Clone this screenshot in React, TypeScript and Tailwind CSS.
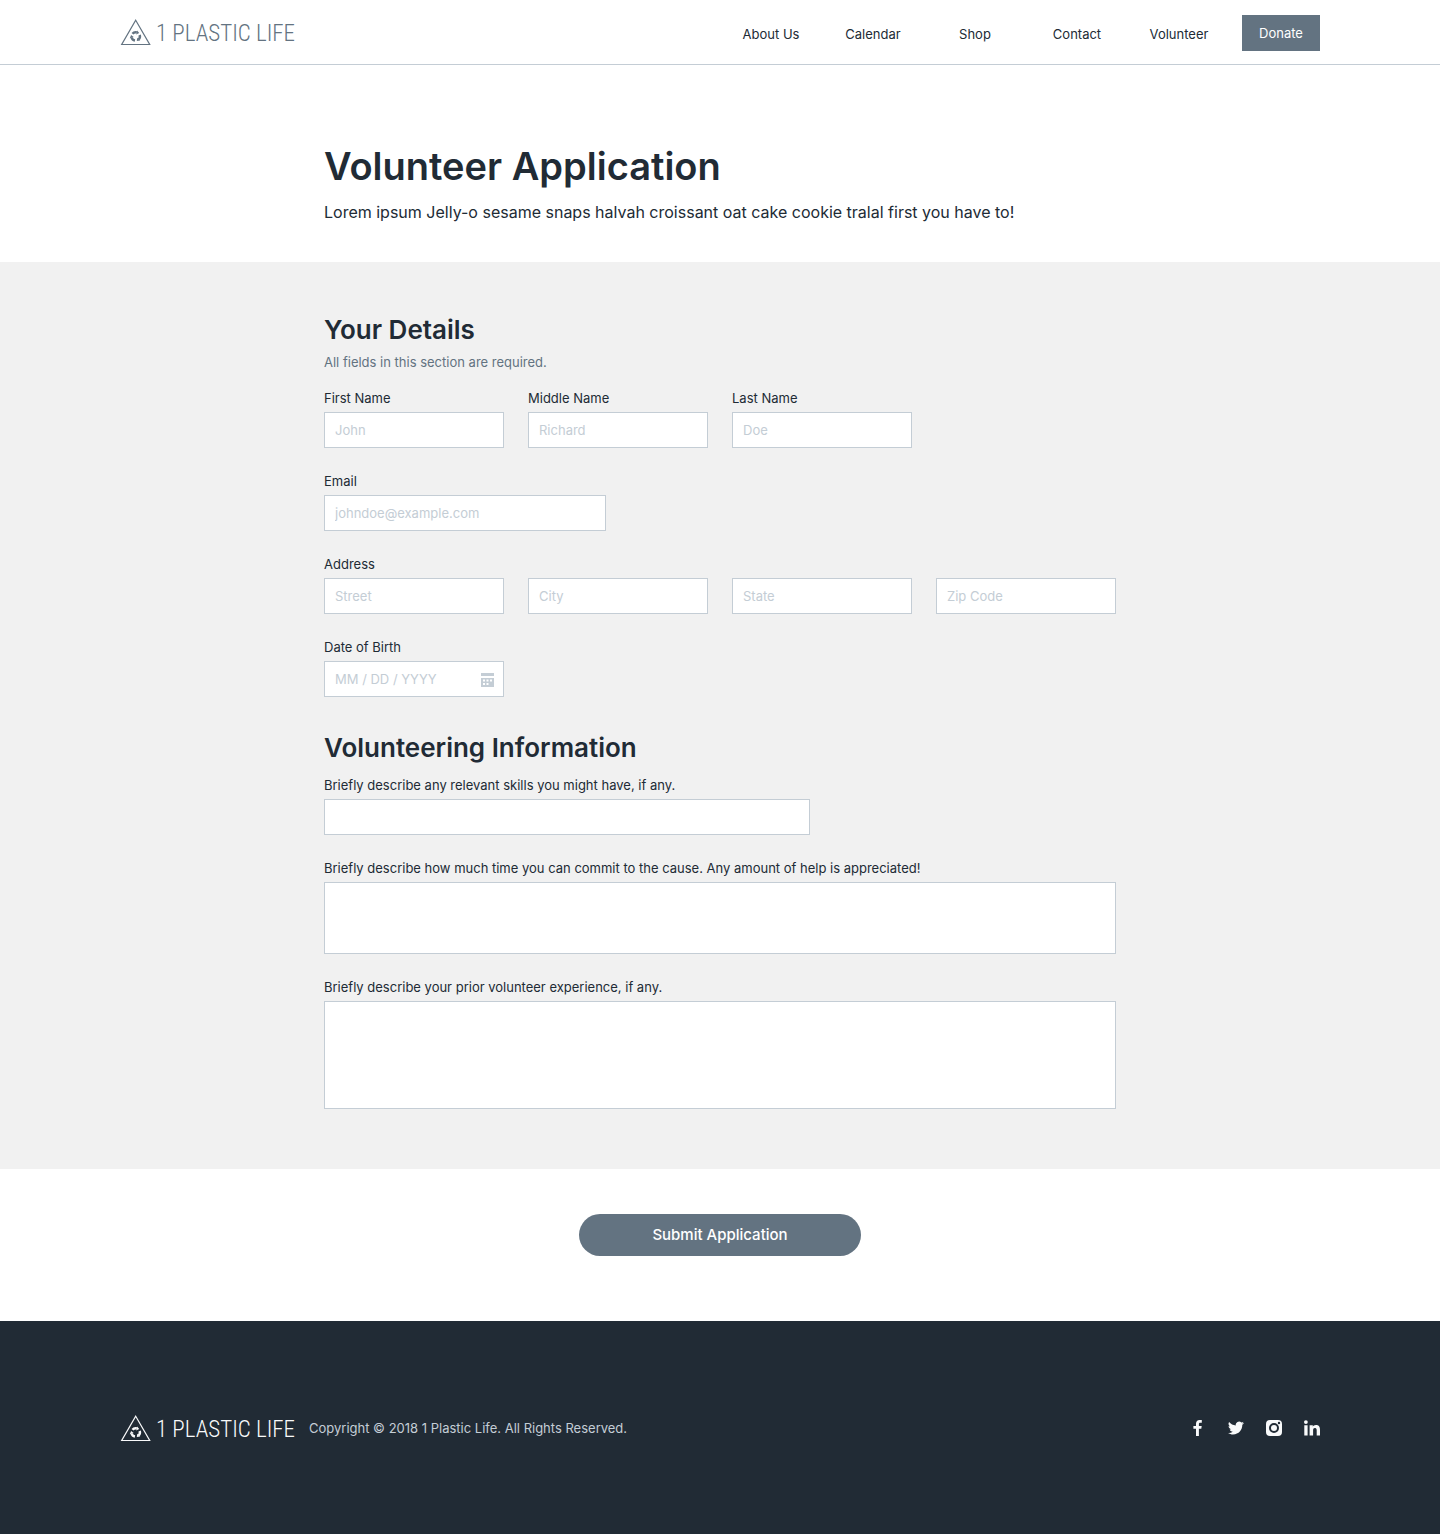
import type { ReactNode } from "react";

const navLinks = ["About Us", "Calendar", "Shop", "Contact", "Volunteer"];

const controlClass =
  "block w-full rounded-none border border-[#c4cdd5] bg-white px-2.5 text-[13px] text-[#212b35] placeholder:text-[#c4cdd5] focus:border-[#637381] focus:outline-none";

const recycleTurns = [0, 120, 240];

function Logo() {
  return (
    <a href="#home" className="flex items-center gap-1">
      <svg viewBox="0 0 32 28" className="h-7 w-8" fill="none" stroke="currentColor" aria-hidden="true">
        <path d="M15.7 2.3 29.7 26.5H1.700Z" strokeWidth="1.2" />
        {recycleTurns.map((turn) => (
          <g key={turn} transform={`translate(9.7 12.4) rotate(${turn} 6 6)`}>
            <path d="M2.780 3.300A4.200 4.200 0 0 1 7.090 1.940" strokeWidth="2.5" />
            <path d="M7.400 0 6.500 4 9.500 2.700Z" fill="currentColor" stroke="none" />
          </g>
        ))}
      </svg>
      <span className="pt-1 font-['Roboto_Condensed','Liberation_Sans_Narrow',sans-serif] text-[23px] leading-6 font-light whitespace-nowrap">
        1 PLASTIC LIFE
      </span>
    </a>
  );
}

function Field({ id, label, className, children }: { id: string; label: string; className: string; children: ReactNode }) {
  return (
    <div className={className}>
      <label htmlFor={id} className="mb-1 block text-[13px] leading-[19px] whitespace-nowrap">
        {label}
      </label>
      {children}
    </div>
  );
}

function TextInput({ id, placeholder, label }: { id: string; placeholder?: string; label?: string }) {
  return (
    <input id={id} name={id} type="text" placeholder={placeholder} aria-label={label} className={`${controlClass} h-9`} />
  );
}

function CalendarIcon() {
  return (
    <svg viewBox="0 0 13 15" className="absolute top-[11px] right-2.5 h-[15px] w-[13px] fill-[#c4cdd5]" aria-hidden="true">
      <path d="M0 1h13v3H0z" />
      <path
        fillRule="evenodd"
        d="M0 6h13v9H0zM2 7.500v2h2v-2zM5.500 7.500v2h2v-2zM9 7.500v2h2v-2zM2 11v2h2v-2zM5.500 11v2h2v-2z"
      />
    </svg>
  );
}

const socials = [
  {
    name: "Facebook",
    path: "M6 16V8.700H3.400V5.900H6V3.800C6 1.400 7.400 0 9.600 0c1 0 1.900.1 2.200.1v2.600h-1.500c-1.200 0-1.400.6-1.400 1.400v1.800h2.800l-.4 2.800H8.900V16z",
  },
  {
    name: "Twitter",
    path: "M16 3c-.6.300-1.200.4-1.900.5.7-.4 1.200-1 1.400-1.800-.6.400-1.300.6-2.100.8a3.300 3.300 0 0 0-5.600 3C5.100 5.400 2.700 4.100 1.100 2.100a3.300 3.300 0 0 0 1 4.400c-.5 0-1-.2-1.500-.4 0 1.600 1.100 2.900 2.600 3.200-.5.100-1 .2-1.500.100.4 1.300 1.600 2.200 3.100 2.300A6.600 6.600 0 0 1 0 13c1.500.9 3.200 1.500 5 1.500 6.100 0 9.500-5.100 9.300-9.800.7-.4 1.300-1 1.700-1.700z",
  },
  {
    name: "Instagram",
    path: "M4 0h8a4 4 0 0 1 4 4v8a4 4 0 0 1-4 4H4a4 4 0 0 1-4-4V4a4 4 0 0 1 4-4zM8 3a5 5 0 1 0 0 10A5 5 0 0 0 8 3zM8 5a3 3 0 1 1 0 6 3 3 0 0 1 0-6zM13 1.800a1.200 1.200 0 1 0 0 2.400 1.200 1.200 0 0 0 0-2.400z",
  },
  {
    name: "LinkedIn",
    path: "M.3 5.300h3.300V15.600H.3zM1.900.2a1.900 1.900 0 1 1 0 3.800 1.900 1.900 0 0 1 0-3.800zM5.600 5.300h3.200v1.400c.4-.8 1.500-1.700 3.200-1.700 3.300 0 4 2.200 4 5v5.600h-3.300v-5c0-1.200 0-2.700-1.700-2.700s-1.900 1.300-1.900 2.600v5.100H5.600z",
  },
];

export default function App() {
  return (
    <div className="min-h-screen bg-white font-['Inter','Liberation_Sans',sans-serif] text-[#212b35]">
      <header className="border-b border-[#c4cdd5] px-6">
        <div className="mx-auto flex h-16 max-w-[1200px] items-center justify-between text-[#637381]">
          <Logo />
          <nav className="flex items-center gap-6 text-[13px] leading-5 text-[#212b35]">
            {navLinks.map((name) => (
              <a key={name} href="#" className="w-[78px] pt-1 text-center whitespace-nowrap hover:underline">
                {name}
              </a>
            ))}
            <a href="#donate" className="mt-0.5 flex h-9 w-[78px] items-center justify-center bg-[#637381] text-white">
              Donate
            </a>
          </nav>
        </div>
      </header>

      <main>
        <div className="px-6 pt-[76px] pb-[38px]">
          <div className="mx-auto max-w-[792px]">
            <h1 className="text-[38px] leading-[50px] font-semibold">Volunteer Application</h1>
            <p className="mt-[9px] text-base leading-6">
              Lorem ipsum Jelly-o sesame snaps halvah croissant oat cake cookie tralal first you have to!
            </p>
          </div>
        </div>

        <form>
          <div className="bg-[#f1f1f1] px-6 pt-[50px] pb-[60px]">
            <div className="mx-auto max-w-[792px]">
              <h2 className="text-[26px] leading-9 font-semibold">Your Details</h2>
              <p className="mt-1 mb-4 text-[13px] leading-[21px] text-[#637381]">All fields in this section are required.</p>
              <div className="grid grid-cols-8 gap-6">
                <Field id="first-name" label="First Name" className="col-span-2">
                  <TextInput id="first-name" placeholder="John" />
                </Field>
                <Field id="middle-name" label="Middle Name" className="col-span-2">
                  <TextInput id="middle-name" placeholder="Richard" />
                </Field>
                <Field id="last-name" label="Last Name" className="col-span-2">
                  <TextInput id="last-name" placeholder="Doe" />
                </Field>
                <Field id="email" label="Email" className="col-span-3 col-start-1">
                  <TextInput id="email" placeholder="johndoe@example.com" />
                </Field>
                <Field id="street" label="Address" className="col-span-2 col-start-1">
                  <TextInput id="street" placeholder="Street" />
                </Field>
                <div className="col-span-2 self-end">
                  <TextInput id="city" placeholder="City" label="City" />
                </div>
                <div className="col-span-2 self-end">
                  <TextInput id="state" placeholder="State" label="State" />
                </div>
                <div className="col-span-2 self-end">
                  <TextInput id="zip" placeholder="Zip Code" label="Zip Code" />
                </div>
                <Field id="birth-date" label="Date of Birth" className="col-span-2 col-start-1">
                  <div className="relative">
                    <TextInput id="birth-date" placeholder="MM / DD / YYYY" />
                    <CalendarIcon />
                  </div>
                </Field>
              </div>

              <h2 className="mt-[33px] mb-2.5 text-[26px] leading-9 font-semibold">Volunteering Information</h2>
              <div className="grid grid-cols-8 gap-6">
                <Field id="skills" label="Briefly describe any relevant skills you might have, if any." className="col-span-5">
                  <TextInput id="skills" />
                </Field>
                <Field
                  id="time"
                  label="Briefly describe how much time you can commit to the cause. Any amount of help is appreciated!"
                  className="col-span-8"
                >
                  <textarea id="time" name="time" className={`${controlClass} h-[72px] resize-none py-2`} />
                </Field>
                <Field id="experience" label="Briefly describe your prior volunteer experience, if any." className="col-span-8">
                  <textarea id="experience" name="experience" className={`${controlClass} h-[108px] resize-none py-2`} />
                </Field>
              </div>
            </div>
          </div>

          <div className="flex justify-center px-6 pt-[45px] pb-[65px]">
            <button type="submit" className="h-[42px] w-[282px] rounded-full bg-[#637381] text-[15px] font-medium text-white">
              Submit Application
            </button>
          </div>
        </form>
      </main>

      <footer className="bg-[#212b35] px-6 pt-[93px] pb-[92px]">
        <div className="mx-auto flex max-w-[1200px] items-center justify-between text-[#f9fafb]">
          <div className="flex items-center gap-3.5">
            <Logo />
            <p className="text-[13px] leading-5 text-[#c4cdd5]">Copyright © 2018 1 Plastic Life. All Rights Reserved.</p>
          </div>
          <div className="flex gap-[22px]">
            {socials.map((social) => (
              <a key={social.name} href="#" aria-label={social.name}>
                <svg viewBox="0 0 16 16" className="size-4" fill="currentColor" fillRule="evenodd" aria-hidden="true">
                  <path d={social.path} />
                </svg>
              </a>
            ))}
          </div>
        </div>
      </footer>
    </div>
  );
}
